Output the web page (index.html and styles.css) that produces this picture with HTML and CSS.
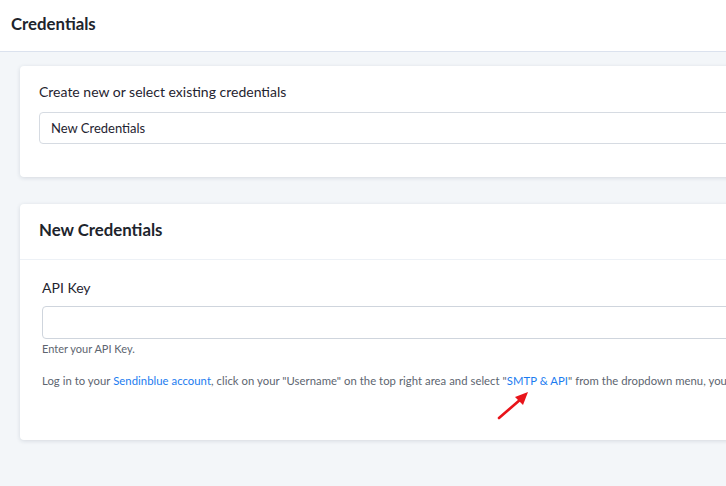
FILE: index.html
```
<!DOCTYPE html>
<html>
<head>
<meta charset="utf-8">
<link rel="stylesheet" href="styles.css">
</head>
<body>
<header class="topbar"><h1 class="page-title">Credentials</h1></header>
<main class="content">
  <section class="card card-select">
    <label class="field-label">Create new or select existing credentials</label>
    <div class="select-box">New Credentials</div>
  </section>
  <section class="card">
    <div class="card-head"><h2 class="card-title">New Credentials</h2></div>
    <div class="card-body">
      <label class="field-label">API Key</label>
      <div class="text-input"></div>
      <p class="hint">Enter your API Key.</p>
      <p class="help">Log in to your <a class="link">Sendinblue account</a>, click on your "Username" on the top right area and select "<a class="link">SMTP &amp; API</a>" from the dropdown menu, you</p>
      <svg class="arrow" width="40" height="36" viewBox="0 0 40 36">
        <line x1="5" y1="31" x2="27" y2="12" stroke="#e8141a" stroke-width="2.6" stroke-linecap="round"/>
        <polygon points="34,5 21,10 29,18" fill="#e8141a"/>
      </svg>
    </div>
  </section>
</main>
</body>
</html>
```
FILE: styles.css
```
html, body {
  margin: 0;
  padding: 0;
  overflow: hidden;
}
body {
  width: 726px;
  height: 486px;
  background: #f3f6f9;
  font-family: Lato, "Open Sans", sans-serif;
  color: #1f2430;
}
.topbar {
  background: #ffffff;
  border-bottom: 1px solid #dbe2ee;
  display: flex;
  align-items: center;
  padding-left: 11px;
  box-sizing: border-box;
  height: 52px;
}
.page-title {
  margin: 0;
  font-size: 16.8px;
  font-weight: 700;
  color: #20242c;
  position: relative;
  top: -2px;
}
.content {
  width: 1100px;
  padding: 14px 0 0 20px;
  display: flex;
  flex-direction: column;
  gap: 27px;
}
.card {
  background: #ffffff;
  border-radius: 4px;
  box-shadow: 0 1px 4px rgba(30, 45, 70, 0.14);
  position: relative;
}
.card-select {
  padding: 16px 19px 33px 19px;
  height: 111px;
  box-sizing: border-box;
}
.field-label {
  display: block;
  font-size: 14px;
  line-height: 20px;
  color: #1f2430;
}
.select-box {
  margin-top: 10px;
  height: 32px;
  box-sizing: border-box;
  border: 1px solid #d6dbe2;
  border-radius: 4px;
  padding-left: 11px;
  display: flex;
  align-items: center;
  font-size: 13px;
  color: #1f2430;
}
.card-head {
  height: 56px;
  border-bottom: 1px solid #edf1f6;
  box-sizing: border-box;
  display: flex;
  align-items: center;
  padding-left: 19px;
}
.card-title {
  margin: 0;
  font-size: 16.8px;
  font-weight: 700;
  color: #20242c;
  position: relative;
  top: -2px;
}
.card-body {
  padding: 18px 22px 0 22px;
  height: 180px;
  box-sizing: border-box;
  position: relative;
}
.text-input {
  margin-top: 8px;
  height: 33px;
  box-sizing: border-box;
  border: 1px solid #cfd5dd;
  border-radius: 4px;
}
.hint {
  margin: 3px 0 0 0;
  font-size: 11px;
  line-height: 14px;
  color: #5d6570;
}
.help {
  margin: 18px 0 0 0;
  font-size: 11.3px;
  letter-spacing: 0.04px;
  line-height: 14px;
  color: #5d6570;
  white-space: nowrap;
}
.link {
  color: #1b7cf0;
}
.arrow {
  position: absolute;
  left: 474px;
  top: 127px;
}
```
